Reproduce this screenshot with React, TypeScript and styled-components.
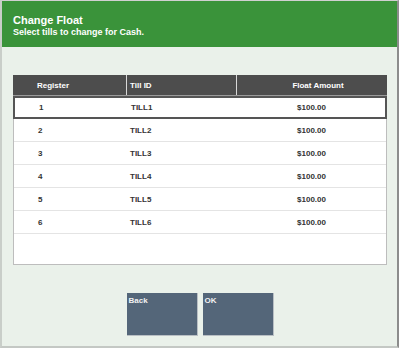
import styled, { createGlobalStyle } from 'styled-components';

const GlobalStyle = createGlobalStyle`
  html, body {
    margin: 0;
    padding: 0;
    background: #ffffff;
    font-family: 'Liberation Sans', Arial, sans-serif;
  }
`;

const tills = [
  { register: '1', id: 'TILL1', amount: '$100.00' },
  { register: '2', id: 'TILL2', amount: '$100.00' },
  { register: '3', id: 'TILL3', amount: '$100.00' },
  { register: '4', id: 'TILL4', amount: '$100.00' },
  { register: '5', id: 'TILL5', amount: '$100.00' },
  { register: '6', id: 'TILL6', amount: '$100.00' },
];

export default function App() {
  const selected = 0;

  return (
    <>
      <GlobalStyle />
      <Frame>
        <Header>
          <Title>Change Float</Title>
          <Subtitle>Select tills to change for Cash.</Subtitle>
        </Header>
        <Body>
          <TableBox>
            <HeadRow>
              <HeadCell $align="left" $pad={24}>Register</HeadCell>
              <HeadCell $align="left" $pad={3}>Till ID</HeadCell>
              <HeadCell $align="center" $pad={12}>Float Amount</HeadCell>
            </HeadRow>
            {tills.map((t, i) => (
              <Row key={t.id} $selected={i === selected}>
                <Cell $align="left" $pad={24}>{t.register}</Cell>
                <Cell $align="left" $pad={3}>{t.id}</Cell>
                <Cell $align="center" $pad={0}>{t.amount}</Cell>
              </Row>
            ))}
          </TableBox>
          <Actions>
            <ActionButton>Back</ActionButton>
            <ActionButton>OK</ActionButton>
          </Actions>
        </Body>
      </Frame>
    </>
  );
}

const Frame = styled.div`
  width: 395px;
  height: 345px;
  display: flex;
  flex-direction: column;
  border-top: 1px solid #d0d0d0;
  border-left: 2px solid #c9cec9;
  border-right: 2px solid #8c8c8c;
  border-bottom: 2px solid #c4c8c4;
  background: #eaf1ea;
  box-sizing: content-box;
`;

const Header = styled.div`
  height: 46px;
  background: #3a933a;
  padding: 13px 0 0 11px;
  box-sizing: border-box;
  color: #ffffff;
  font-weight: bold;
`;

const Title = styled.div`
  font-size: 11px;
  line-height: 13px;
`;

const Subtitle = styled.div`
  font-size: 9px;
  line-height: 11px;
`;

const Body = styled.div`
  flex: 1;
  display: flex;
  flex-direction: column;
  padding: 28px 10px 0 11px;
`;

const TableBox = styled.div`
  height: 190px;
  box-sizing: border-box;
  background: #ffffff;
  border: 1px solid #bdbdbd;
  border-top: none;
`;

const columns = `113px 110px 1fr`;

const HeadRow = styled.div`
  display: grid;
  grid-template-columns: ${columns};
  height: 20px;
  background: #4d4d4d;
  border-bottom: 1px solid #9a9a9a;
  margin: 0 -1px;
`;

const HeadCell = styled.div<{ $align: string; $pad: number }>`
  display: flex;
  align-items: center;
  justify-content: ${(p) => (p.$align === 'center' ? 'center' : 'flex-start')};
  padding-left: ${(p) => p.$pad}px;
  color: #ffffff;
  font-size: 8px;
  font-weight: bold;
  & + & {
    border-left: 1px solid #d8d8d8;
  }
`;

const Row = styled.div<{ $selected: boolean }>`
  display: grid;
  grid-template-columns: ${columns};
  height: 23px;
  box-sizing: border-box;
  border: ${(p) => (p.$selected ? '2px solid #555555' : 'none')};
  border-bottom: ${(p) => (p.$selected ? '2px solid #555555' : '1px solid #e4e4e4')};
  margin: ${(p) => (p.$selected ? '0 -1px' : '0')};
`;

const Cell = styled.div<{ $align: string; $pad: number }>`
  display: flex;
  align-items: center;
  justify-content: ${(p) => (p.$align === 'center' ? 'center' : 'flex-start')};
  padding-left: ${(p) => p.$pad}px;
  color: #333333;
  font-size: 8px;
  font-weight: bold;
`;

const Actions = styled.div`
  display: flex;
  justify-content: center;
  gap: 5px;
  margin-top: 28px;
`;

const ActionButton = styled.button`
  width: 71px;
  height: 43px;
  padding: 3px 2px;
  border: none;
  border-right: 1px solid #b9bfc4;
  border-bottom: 1px solid #b9bfc4;
  background: #546679;
  color: #f2f2f2;
  font-family: 'Liberation Sans', Arial, sans-serif;
  font-size: 8px;
  font-weight: bold;
  text-align: left;
  display: flex;
  align-items: flex-start;
`;
